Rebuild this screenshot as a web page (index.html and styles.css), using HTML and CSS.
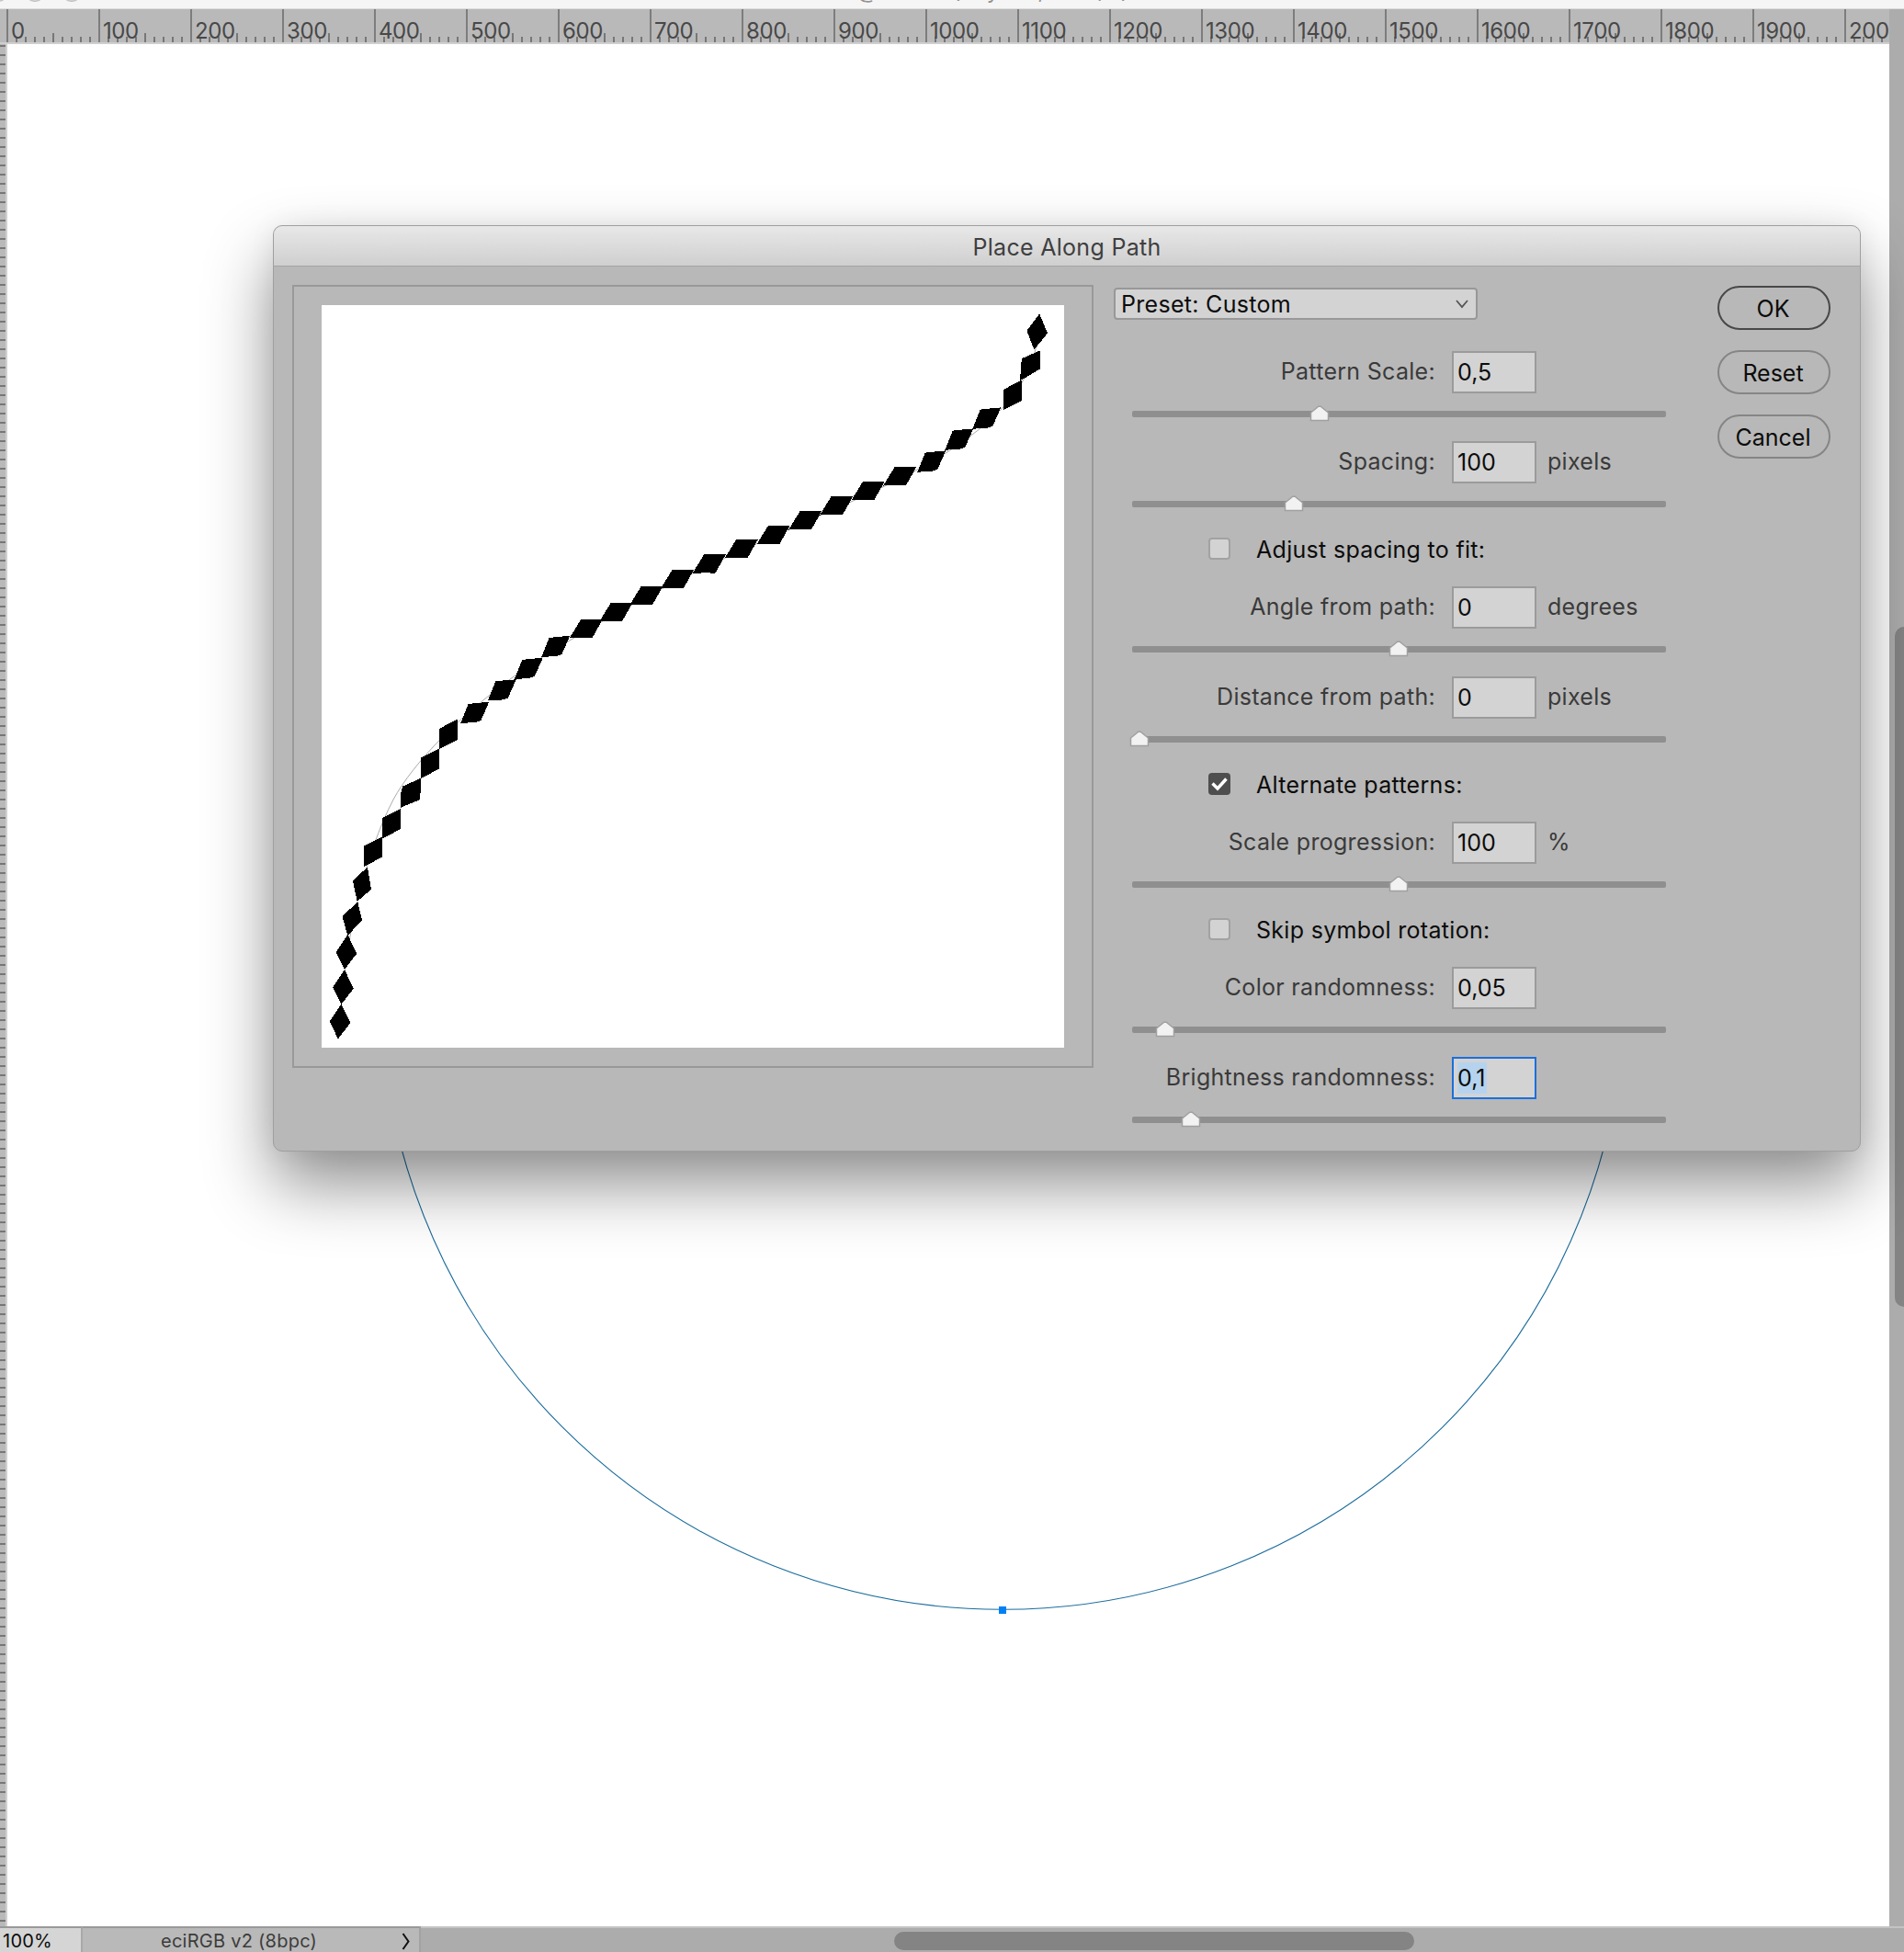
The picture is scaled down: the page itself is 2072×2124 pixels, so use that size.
FILE: index.html
```
<!DOCTYPE html>
<html lang="en">
<head>
<meta charset="UTF-8">
<title>Place Along Path</title>
<link rel="stylesheet" href="styles.css">
</head>

<body>

<div class="app">

<!-- DOCUMENT TITLE -->
<div class="doc-title">
<div class="lights"><i></i><i></i><i></i></div>
<span>@ 100% (Layer 1, RGB/8)</span>
</div>

<!-- WORKSPACE -->
<div class="main">
<div class="doc">
<div class="ruler-top">
<span>0</span><span>100</span><span>200</span><span>300</span><span>400</span><span>500</span><span>600</span>
<span>700</span><span>800</span><span>900</span><span>1000</span><span>1100</span><span>1200</span><span>1300</span>
<span>1400</span><span>1500</span><span>1600</span><span>1700</span><span>1800</span><span>1900</span><span>200</span>
</div>
<div class="doc-row">
<div class="ruler-left"></div>
<svg class="canvas" viewBox="8 48 2048 2048">
<circle cx="1091" cy="1074" r="677.3" fill="none" stroke="#1a6c9c" stroke-width="1.1"/>
<rect x="1087" y="1748" width="8" height="8" fill="#0080f5"/>
</svg>
</div>
</div>
<div class="vscroll"><div class="vthumb"></div></div>
</div>

<!-- STATUS BAR -->
<div class="bottom">
<div class="zoom">100%</div>
<div class="status">
<span>eciRGB v2 (8bpc)</span>
<svg width="10" height="20" viewBox="0 0 10 20"><path d="M1.5 2 L7.5 10.5 L1.5 19" fill="none" stroke="#111" stroke-width="2"/></svg>
</div>
<div class="hscroll"><div class="hthumb"></div></div>
</div>

</div>

<!-- DIALOG -->
<div class="dialog">
<div class="dialog-title">Place Along Path</div>
<div class="dialog-body">

<div class="preview">
<svg viewBox="0 0 808 808">
<defs>
<polygon id="wide" points="-17.5,10 -5.5,-9.5 17,-9.5 6,10 -3,9.5"/>
<polygon id="mid" points="-15,11.5 -7,-8.5 1,-9.5 14.5,-10.7 6,8.5 0,10.5"/>
<polygon id="tall" points="-9.7,15.8 -9.7,-5.5 9.7,-15.3 9.7,5.7"/>
<polygon id="kite" points="-2,17.5 -10.7,-.3 1.3,-18.5 10.7,1"/>
</defs>
<path d="M20 785 C24 690 48 596 78 538 C100 498 150 445 226 392 C300 345 380 301 457 267 C560 220 640 190 697 149 C745 115 775 80 780 30" fill="none" stroke="#aaa" stroke-width="1"/>
<g class="diamonds">
<use href="#kite" x="20" y="780"/>
<use href="#kite" x="23.5" y="742.5"/>
<use href="#kite" x="27" y="704.5"/>
<polygon points="28.5,685 23,665 39,650.5 43.5,669.5"/>
<polygon points="39,648 34.5,626.5 49.5,612.5 53.5,635.5"/>
<use href="#tall" x="56" y="594.5"/>
<use href="#tall" x="76" y="564"/>
<polygon points="86.5,546 86.5,532 88.5,524 107.5,515.5 107.5,528 106,538"/>
<use href="#tall" x="118" y="498.5"/>
<use href="#tall" x="138" y="466.7"/>
<use href="#mid" x="167" y="443"/>
<use href="#mid" x="196.5" y="418.5"/>
<use href="#mid" x="225.5" y="395"/>
<use href="#mid" x="255" y="371"/>
<use href="#wide" x="288" y="352"/>
<use href="#wide" x="320.5" y="334"/>
<use href="#wide" x="353.5" y="316"/>
<use href="#wide" x="387.5" y="297.7"/>
<use href="#wide" x="422" y="281.3"/>
<use href="#wide" x="457" y="265"/>
<use href="#wide" x="492" y="249.5"/>
<use href="#wide" x="526.5" y="234"/>
<use href="#wide" x="560.5" y="218"/>
<use href="#wide" x="595" y="201.7"/>
<use href="#wide" x="629.5" y="186"/>
<use href="#mid" x="664" y="169.7"/>
<use href="#mid" x="694" y="145.7"/>
<use href="#mid" x="724" y="122.7"/>
<use href="#tall" x="752" y="97.7"/>
<polygon points="760.5,81.5 762.3,58.5 781.7,50 781.7,69"/>
<polygon points="775.5,47.5 768,28 781,10.5 789.5,30.5"/>
</g>
</svg>
</div>

<div class="form">
<div class="preset">Preset: Custom<svg width="14" height="10" viewBox="0 0 14 10"><path d="M1 1 L7 8 L13 1" fill="none" stroke="#555" stroke-width="1.8"/></svg></div>

<div class="field">
<label>Pattern Scale:</label><div class="value">0,5</div><span></span>
<div class="slider"><svg class="thumb" style="left:193px" viewBox="0 0 22 18"><path d="M1.5 16.5V8L9.8 1.2h2.4L20.5 8v8.5z"/></svg></div>
</div>
<div class="field">
<label>Spacing:</label><div class="value">100</div><span>pixels</span>
<div class="slider"><svg class="thumb" style="left:165px" viewBox="0 0 22 18"><path d="M1.5 16.5V8L9.8 1.2h2.4L20.5 8v8.5z"/></svg></div>
</div>
<div class="check"><div class="box"></div>Adjust spacing to fit:</div>
<div class="field">
<label>Angle from path:</label><div class="value">0</div><span>degrees</span>
<div class="slider"><svg class="thumb" style="left:279px" viewBox="0 0 22 18"><path d="M1.5 16.5V8L9.8 1.2h2.4L20.5 8v8.5z"/></svg></div>
</div>
<div class="field">
<label>Distance from path:</label><div class="value">0</div><span>pixels</span>
<div class="slider"><svg class="thumb" style="left:-3px" viewBox="0 0 22 18"><path d="M1.5 16.5V8L9.8 1.2h2.4L20.5 8v8.5z"/></svg></div>
</div>
<div class="check"><div class="box on"><svg viewBox="0 0 24 24"><path d="M4.5 11.5 L10 17 L19.5 6.5" fill="none" stroke="#fff" stroke-width="3.4"/></svg></div>Alternate patterns:</div>
<div class="field">
<label>Scale progression:</label><div class="value">100</div><span>%</span>
<div class="slider"><svg class="thumb" style="left:279px" viewBox="0 0 22 18"><path d="M1.5 16.5V8L9.8 1.2h2.4L20.5 8v8.5z"/></svg></div>
</div>
<div class="check"><div class="box"></div>Skip symbol rotation:</div>
<div class="field">
<label>Color randomness:</label><div class="value">0,05</div><span></span>
<div class="slider"><svg class="thumb" style="left:25px" viewBox="0 0 22 18"><path d="M1.5 16.5V8L9.8 1.2h2.4L20.5 8v8.5z"/></svg></div>
</div>
<div class="field">
<label>Brightness randomness:</label><div class="value focus"><mark>0,1</mark></div><span></span>
<div class="slider"><svg class="thumb" style="left:53px" viewBox="0 0 22 18"><path d="M1.5 16.5V8L9.8 1.2h2.4L20.5 8v8.5z"/></svg></div>
</div>
</div>

<div class="buttons">
<button class="ok">OK</button>
<button>Reset</button>
<button>Cancel</button>
</div>

</div>
</div>

</body>
</html>
```
FILE: styles.css
```
*{box-sizing:border-box;}

body{
margin:0;
overflow:hidden;
font-family:Inter,"Liberation Sans",sans-serif;
font-size:25px;
letter-spacing:0.3px;
color:#0c0c0c;
}

.app{
display:flex;
flex-direction:column;
width:2072px;
height:2124px;
background:#b9b9b9;
}

/* DOCUMENT TITLE */
.doc-title{
position:relative;
flex:none;
height:10px;
background:#f5f5f5;
border-bottom:1px solid #dcdcdc;
overflow:hidden;
font-size:24px;
line-height:30px;
color:#929292;
}
.doc-title span{position:absolute;left:932px;top:-25px;white-space:nowrap;letter-spacing:0.6px;}
.lights{position:absolute;left:-14px;top:-22px;display:flex;gap:16px;}
.lights i{width:24px;height:24px;border-radius:50%;background:#d4d4d4;border:1px solid #bbb;}

/* WORKSPACE */
.main{display:flex;flex:none;height:2086px;}
.doc{width:2056px;display:flex;flex-direction:column;}

/* RULERS */
.ruler-top{
display:flex;
flex:none;
height:38px;
padding-left:7px;
overflow:hidden;
border-bottom:2px solid #cfcfcf;
background:
repeating-linear-gradient(90deg,#777 0 2px,transparent 2px 100px) 57px 26px/100% 10px no-repeat,
repeating-linear-gradient(90deg,#777 0 2px,transparent 2px 10px) 7px 30px/100% 6px no-repeat,
#b9b9b9;
}
.ruler-top span{
flex:none;
width:100px;
height:36px;
padding-left:3px;
border-left:2px solid #7d7d7d;
font-size:24px;
line-height:47px;
letter-spacing:-0.4px;
color:#484848;
}
.ruler-top span:last-child{width:49px;}
.doc-row{display:flex;flex:1;}
.ruler-left{
width:8px;
border-right:2px solid #d0d0d0;
background:repeating-linear-gradient(#777 0 2px,#b9b9b9 2px 10px) 0 1px;
}
.canvas{width:2048px;height:2048px;background:#fff;}

/* SCROLLBARS */
.vscroll{width:16px;background:#acacac;padding:672px 0 0 6px;overflow:hidden;}
.vthumb{width:20px;height:740px;border-radius:10px;background:#848484;}
.hscroll{flex:1;background:#acacac;padding:4px 0 0 515px;border-top:2px solid #c4c4c4;}
.hthumb{width:566px;height:20px;border-radius:10px;background:#848484;}

/* STATUS BAR */
.bottom{display:flex;height:28px;font-size:20px;letter-spacing:0.25px;}
.zoom{
width:90px;
padding-left:3px;
line-height:28px;
border-top:2px solid #999;
border-right:2px solid #a8a8a8;
background:#d5d5d5;
}
.status{
display:flex;
justify-content:space-between;
align-items:center;
width:368px;
padding:2px 9px 0 85px;
border-top:2px solid #999;
border-right:2px solid #a2a2a2;
color:#3c3c3c;
}

/* DIALOG */
.dialog{
position:absolute;
left:297px;
top:245px;
width:1728px;
height:1008px;
border:1px solid #9f9f9f;
border-radius:10px;
background:#b8b8b8;
box-shadow:0 36px 72px rgba(0,0,0,.44),0 0 30px rgba(0,0,0,.06);
}
.dialog-title{
height:44px;
border-bottom:1px solid #a4a4a4;
border-radius:9px 9px 0 0;
background:linear-gradient(#e8e8e8,#cfcfcf);
text-align:center;
line-height:46px;
color:#3f3f3f;
}
.dialog-body{display:flex;align-items:flex-start;padding:20px 0 0 20px;}

/* PREVIEW */
.preview{
width:872px;
height:852px;
padding:20px 30px;
border:2px solid #999;
}
.preview svg{display:block;width:808px;height:808px;background:#fff;}
.diamonds{fill:#000;stroke:#000;stroke-width:1;shape-rendering:crispEdges;}

/* FORM */
.form{width:601px;margin:3px 0 0 22px;}
.preset{
display:flex;
justify-content:space-between;
align-items:center;
width:396px;
height:35px;
margin-bottom:34px;
padding:1px 8px 0 6px;
border:2px solid #989898;
border-radius:4px;
background:#d3d3d3;
}
.field{
display:grid;
grid-template-columns:350px 92px 140px;
grid-template-rows:46px 52px;
column-gap:18px;
align-items:center;
color:#3a3a3a;
white-space:nowrap;
}
.field span{margin:-2px 0 0 -6px;}
.field label{margin-top:-2px;text-align:right;}
.value{
height:46px;
padding-left:4px;
border:2px solid #9b9b9b;
background:#d3d3d3;
line-height:42px;
letter-spacing:0;
color:#0c0c0c;
}
.focus{display:flex;padding:4px 0 0 4px;border-color:#1b6fdc;}
.value mark{
height:34px;
padding-right:2px;
background:#b5d3ee;
line-height:34px;
color:inherit;
}
.slider{
position:relative;
grid-column:1/4;
align-self:start;
width:581px;
height:7px;
margin:19px 0 0 20px;
border-radius:2px;
background:#8f8f8f;
}
.thumb{position:absolute;top:-6px;width:22px;height:18px;}
.thumb path{fill:#f2f2f2;stroke:#a0a0a0;stroke-width:1.5;}

/* CHECKBOXES */
.check{display:flex;align-items:center;height:60px;margin-left:103px;padding-bottom:21px;}
.box{
width:24px;
height:24px;
margin:-2px 28px 0 0;
border:2px solid #a2a2a2;
border-radius:4px;
background:#d3d3d3;
}
.on{border:none;background:#4e4e4e;}
.on svg{display:block;}

/* BUTTONS */
.buttons{display:flex;flex-direction:column;gap:22px;margin:1px 0 0 56px;}
button{
width:123px;
height:48px;
padding:2px 2px 0 0;
border:2px solid #858585;
border-radius:24px;
background:none;
font:inherit;
letter-spacing:0;
color:inherit;
}
.ok{border-color:#484848;}
```
